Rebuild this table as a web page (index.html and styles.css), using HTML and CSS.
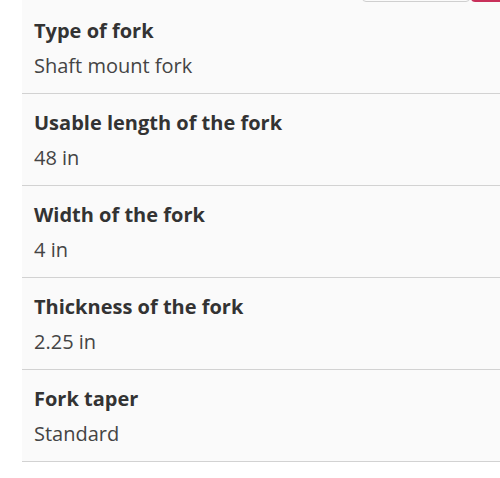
FILE: index.html
```html
<!DOCTYPE html>
<html lang="en">
<head>
<meta charset="utf-8">
<link rel="stylesheet" href="styles.css">
</head>
<body>
<div class="panel">
  <div class="toolbar">
    <span class="btn-outline"></span>
    <span class="btn-primary"></span>
  </div>
  <dl class="specs">
    <div class="row">
      <dt class="label">Type of fork</dt>
      <dd class="value">Shaft mount fork</dd>
    </div>
    <div class="row">
      <dt class="label">Usable length of the fork</dt>
      <dd class="value">48 in</dd>
    </div>
    <div class="row">
      <dt class="label">Width of the fork</dt>
      <dd class="value">4 in</dd>
    </div>
    <div class="row">
      <dt class="label">Thickness of the fork</dt>
      <dd class="value">2.25 in</dd>
    </div>
    <div class="row">
      <dt class="label">Fork taper</dt>
      <dd class="value">Standard</dd>
    </div>
  </dl>
</div>
</body>
</html>
```

FILE: styles.css
```css
html, body {
  margin: 0;
  padding: 0;
  background: #ffffff;
}
body {
  font-family: "Open Sans", "Noto Sans", sans-serif;
  padding-left: 22px;
}
.panel {
  background: #fafafa;
  overflow: hidden;
}
.toolbar {
  display: flex;
  justify-content: flex-end;
  gap: 1px;
  margin-top: -40px;
  height: 42px;
}
.btn-outline {
  width: 108px;
  height: 42px;
  box-sizing: border-box;
  border: 1px solid #cfcfcf;
  border-radius: 4px;
  background: #fafafa;
}
.btn-primary {
  width: 29px;
  height: 42px;
  background: #c8305a;
  border-radius: 4px 0 0 4px;
}
.specs {
  margin: 0;
  padding: 0;
}
.row {
  padding: 12px 0 10px 12px;
  border-bottom: 1.25px solid #d2d2d2;
}
.label {
  margin: 0;
  font-weight: 700;
  font-size: 20px;
  line-height: 34px;
  color: #333333;
}
.value {
  margin: 0;
  font-size: 20px;
  line-height: 35px;
  color: #444444;
}
```
